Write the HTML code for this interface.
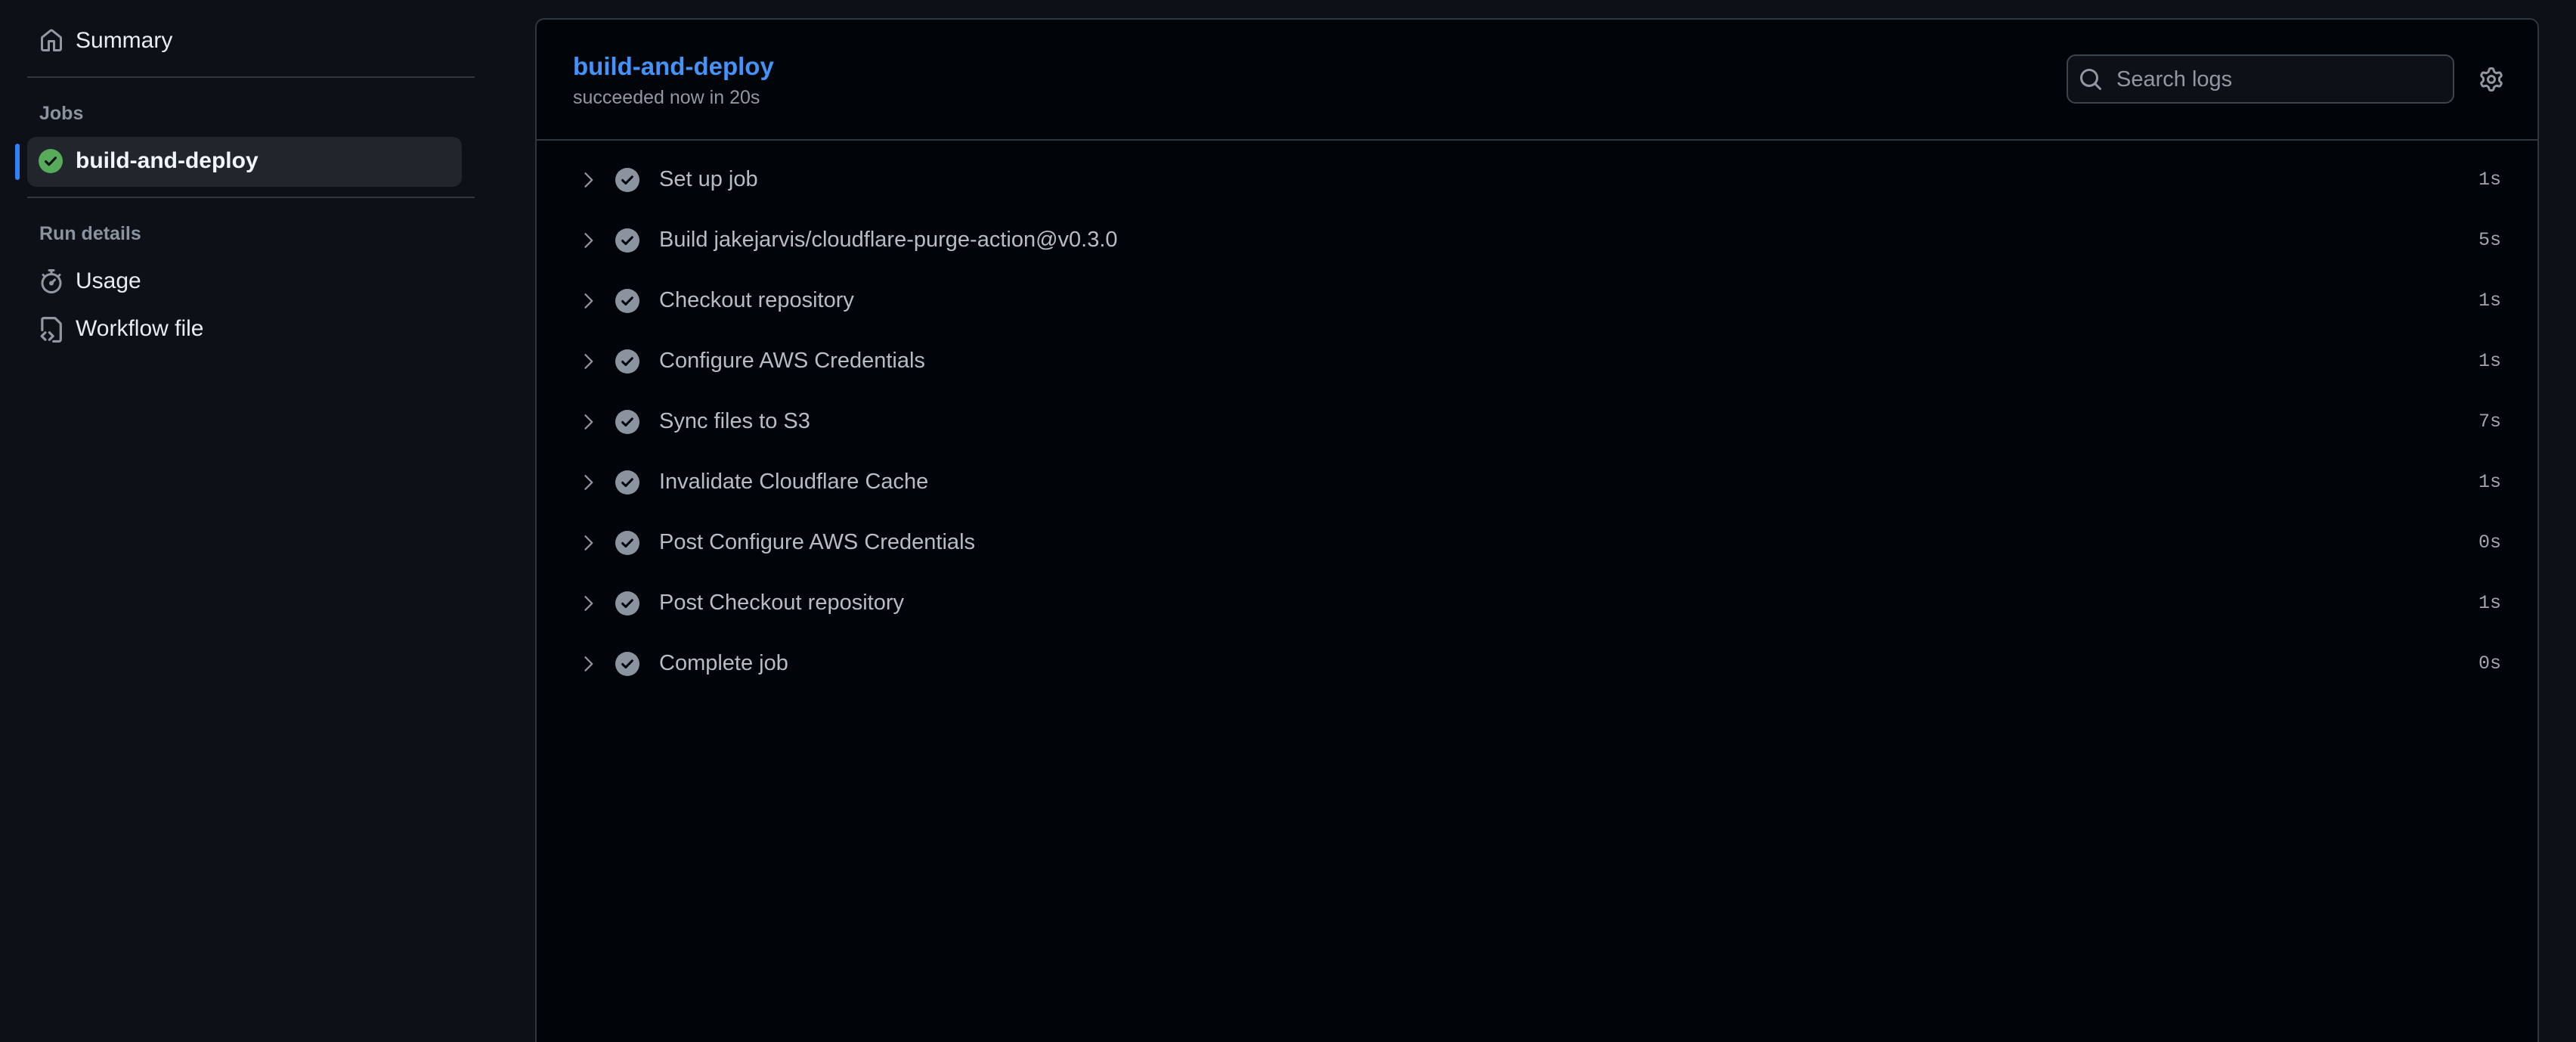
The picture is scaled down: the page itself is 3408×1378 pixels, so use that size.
<!DOCTYPE html>
<html><head><meta charset="utf-8"><style>
*{box-sizing:border-box;margin:0;padding:0}
html,body{width:3408px;height:1378px;overflow:hidden;background:#0d1117;font-family:"Liberation Sans",sans-serif;color:#e6edf3}
#wrap{position:relative;width:3408px;height:1378px;overflow:hidden}
.abs{position:absolute}
.side-t{position:absolute;left:100px;font-size:30px;line-height:36px;color:#e6edf3}
.lbl{position:absolute;left:52px;font-size:25px;font-weight:bold;color:#8b949e}
.hr{position:absolute;left:36px;width:592px;height:2px;background:#30363d}
.panel{position:absolute;left:708px;top:24px;width:2651px;height:1420px;background:#010409;border:2px solid #30363d;border-radius:12px}
.row{position:absolute;left:0;width:100%;height:80px}
.row .chev{position:absolute;left:54px;top:26px}
.row .ck{position:absolute;left:104px;top:24px}
.row .nm{position:absolute;left:162px;top:21px;font-size:29px;line-height:36px;color:#b7bdc5}
.row .tm{position:absolute;right:48px;top:22px;font-family:"Liberation Mono",monospace;font-size:25px;line-height:36px;color:#9ea6af}
</style></head><body><div id="wrap">
<svg class="abs" style="left:52px;top:38px" width="32" height="32" viewBox="0 0 16 16"><path fill="#9198a1" d="M6.906.664a1.749 1.749 0 0 1 2.187 0l5.25 4.2c.415.332.657.835.657 1.367v7.019A1.75 1.75 0 0 1 13.250 15h-3.5a.75.75 0 0 1-.75-.75V9H7v5.25a.75.75 0 0 1-.75.75h-3.5A1.75 1.75 0 0 1 1 13.25V6.23c0-.531.242-1.034.657-1.366l5.25-4.2Zm1.25 1.171a.25.25 0 0 0-.312 0l-5.25 4.2a.25.25 0 0 0-.094.196v7.019c0 .138.112.25.25.25H5.5V8.25a.75.75 0 0 1 .75-.75h3.5a.75.75 0 0 1 .75.75v5.25h2.75a.25.25 0 0 0 .25-.25V6.23a.25.25 0 0 0-.094-.195Z"/></svg>
<div class="side-t" style="top:36px">Summary</div>
<div class="hr" style="top:101px"></div>
<div class="lbl" style="top:136px">Jobs</div>
<div class="abs" style="left:36px;top:181px;width:575px;height:66px;background:#21262d;border-radius:12px"></div>
<div class="abs" style="left:20px;top:190px;width:6px;height:48px;background:#2f81f7;border-radius:3px"></div>
<svg class="abs" style="left:51px;top:197px" width="32" height="32" viewBox="0 0 16 16"><circle cx="8" cy="8" r="8" fill="#57ab5a"/><path d="M4.8 8.3l2.1 2.1 4.3-4.5" stroke="#0d1117" stroke-width="1.6" fill="none" stroke-linecap="round" stroke-linejoin="round"/></svg>
<div class="side-t" style="top:195px;font-weight:bold;color:#f0f6fc">build-and-deploy</div>
<div class="hr" style="top:260px"></div>
<div class="lbl" style="top:295px">Run details</div>
<svg class="abs" style="left:52px;top:356px" width="32" height="32" viewBox="0 0 16 16"><path fill="#9198a1" d="M5.75.75A.75.75 0 0 1 6.5 0h3a.75.75 0 0 1 0 1.5h-.75v1l-.001.041a6.724 6.724 0 0 1 3.464 1.435l.007-.006.75-.75a.749.749 0 0 1 1.275.326.749.749 0 0 1-.215.734l-.75.75-.006.007a6.75 6.75 0 1 1-10.548 0L2.72 5.03l-.75-.75a.751.751 0 0 1 .018-1.042.751.751 0 0 1 1.042-.018l.75.75.007.006A6.720 6.720 0 0 1 7.25 2.541V1.5H6.5a.75.75 0 0 1-.75-.75ZM8 14.5A5.25 5.25 0 1 0 8 4a5.25 5.25 0 0 0 0 10.5Zm.389-6.7 1.33-1.33a.75.75 0 1 1 1.061 1.060L9.45 8.861A1.503 1.503 0 0 1 8 10.75a1.499 1.499 0 1 1 .389-2.95Z"/></svg>
<div class="side-t" style="top:354px">Usage</div>
<svg class="abs" style="left:50px;top:419px" width="34" height="34" viewBox="0 0 16 16"><path fill="#9198a1" d="M2 1.75C2 .784 2.784 0 3.75 0h6.586c.464 0 .909.184 1.237.513l2.914 2.914c.329.328.513.773.513 1.237v9.586A1.75 1.75 0 0 1 13.25 16h-3.5a.75.75 0 0 1 0-1.5h3.5a.25.25 0 0 0 .25-.25V4.664a.25.25 0 0 0-.073-.177l-2.914-2.914a.25.25 0 0 0-.177-.073H3.75a.25.25 0 0 0-.25.25v6.5a.75.75 0 0 1-1.5 0v-6.5Zm3.22 8.53-1.72 1.72 1.72 1.72a.75.75 0 0 1-1.06 1.060l-2.25-2.25a.75.75 0 0 1 0-1.060l2.25-2.25a.75.75 0 0 1 1.06 1.060Zm2.56-1.06 2.25 2.25a.75.75 0 0 1 0 1.060l-2.25 2.25a.75.75 0 1 1-1.06-1.060l1.72-1.72-1.72-1.72a.75.75 0 1 1 1.06-1.060Z"/></svg>
<div class="side-t" style="top:417px">Workflow file</div>

<div class="panel">
  <div class="abs" style="left:48px;top:42px;font-size:33px;font-weight:bold;color:#4493f8;line-height:40px">build-and-deploy</div>
  <div class="abs" style="left:48px;top:88px;font-size:25px;color:#9198a1;line-height:30px">succeeded now in 20s</div>
  <div class="abs" style="left:2024px;top:46px;width:513px;height:65px;background:#0d1117;border:2px solid #3d444d;border-radius:12px">
    <svg class="abs" style="left:14px;top:15px" width="32" height="32" viewBox="0 0 16 16"><path fill="#9198a1" d="M10.68 11.74a6 6 0 0 1-7.922-8.982 6 6 0 0 1 8.982 7.922l3.040 3.040a.749.749 0 0 1-.326 1.275.749.749 0 0 1-.734-.215ZM11.5 7a4.499 4.499 0 1 0-8.997 0A4.499 4.499 0 0 0 11.5 7Z"/></svg>
    <div class="abs" style="left:64px;top:12px;font-size:29px;line-height:38px;color:#9198a1">Search logs</div>
  </div>
  <svg class="abs" style="left:2570px;top:63px" width="32" height="32" viewBox="0 0 16 16"><path fill="#9198a1" d="M8 0a8.2 8.2 0 0 1 .701.031C9.444.095 9.99.645 10.16 1.29l.288 1.107c.018.066.079.158.212.224.231.114.454.243.668.386.123.082.233.09.299.071l1.103-.303c.644-.176 1.392.021 1.82.63.27.385.506.792.704 1.218.315.675.111 1.422-.364 1.891l-.814.806c-.049.048-.098.147-.088.294.016.257.016.515 0 .772-.01.147.038.246.088.294l.814.806c.475.469.679 1.216.364 1.891a7.977 7.977 0 0 1-.704 1.217c-.428.61-1.176.807-1.82.63l-1.102-.302c-.067-.019-.177-.011-.3.071a5.909 5.909 0 0 1-.668.386c-.133.066-.194.158-.211.224l-.29 1.106c-.168.646-.715 1.196-1.458 1.26a8.006 8.006 0 0 1-1.402 0c-.743-.064-1.289-.614-1.458-1.26l-.289-1.106c-.018-.066-.079-.158-.212-.224a5.738 5.738 0 0 1-.668-.386c-.123-.082-.233-.09-.299-.071l-1.103.303c-.644.176-1.392-.021-1.82-.63a8.12 8.12 0 0 1-.704-1.218c-.315-.675-.111-1.422.363-1.891l.815-.806c.05-.048.098-.147.088-.294a6.214 6.214 0 0 1 0-.772c.01-.147-.038-.246-.088-.294l-.815-.806C.635 6.045.431 5.298.746 4.623a7.92 7.92 0 0 1 .704-1.217c.428-.61 1.176-.807 1.82-.63l1.102.302c.067.019.177.011.3-.071.214-.143.437-.272.668-.386.133-.066.194-.158.211-.224l.29-1.106C6.009.645 6.556.095 7.299.03 7.53.01 7.764 0 8 0Zm-.571 1.525c-.036.003-.108.036-.137.146l-.289 1.105c-.147.561-.549.967-.998 1.189-.173.086-.34.183-.5.29-.417.278-.97.423-1.529.27l-1.103-.303c-.109-.03-.175.016-.195.045-.22.312-.412.644-.573.99-.014.031-.021.11.059.19l.815.806c.411.406.562.957.53 1.456a4.709 4.709 0 0 0 0 .582c.032.499-.119 1.05-.53 1.456l-.815.806c-.081.08-.073.159-.059.19.162.346.353.677.573.989.02.03.085.076.195.046l1.102-.303c.56-.153 1.113-.008 1.53.27.161.107.328.204.501.29.447.222.85.629.997 1.189l.289 1.105c.029.109.101.143.137.146a6.6 6.6 0 0 0 1.142 0c.036-.003.108-.036.137-.146l.289-1.105c.147-.561.549-.967.998-1.189.173-.086.34-.183.5-.29.417-.278.97-.423 1.529-.27l1.103.303c.109.029.175-.016.195-.045.22-.313.411-.644.573-.99.014-.031.021-.11-.059-.19l-.815-.806c-.411-.406-.562-.957-.53-1.456a4.709 4.709 0 0 0 0-.582c-.032-.499.119-1.05.53-1.456l.815-.806c.081-.08.073-.159.059-.19a6.464 6.464 0 0 0-.573-.989c-.02-.03-.085-.076-.195-.046l-1.102.303c-.56.153-1.113.008-1.53-.27a4.440 4.440 0 0 0-.501-.29c-.447-.222-.85-.629-.997-1.189l-.289-1.105c-.029-.11-.101-.143-.137-.146a6.6 6.6 0 0 0-1.142 0ZM11 8a3 3 0 1 1-6 0 3 3 0 0 1 6 0ZM9.5 8a1.5 1.5 0 1 0-3.001.001A1.5 1.5 0 0 0 9.5 8Z"/></svg>
  <div class="abs" style="left:0;top:158px;width:100%;height:2px;background:#30363d"></div>
  <div class="abs" style="left:0;top:172px;width:100%">
    <div class="row" style="top:0"><svg class="chev" width="28" height="28" viewBox="0 0 16 16"><path d="M6 3l5 5-5 5" stroke="#9198a1" stroke-width="1.3" fill="none" stroke-linecap="round" stroke-linejoin="round"/></svg><svg class="ck" width="32" height="32" viewBox="0 0 16 16"><circle cx="8" cy="8" r="8" fill="#8b949e"/><path d="M4.8 8.2l2.1 2.1 4.3-4.4" stroke="#010409" stroke-width="1.5" fill="none" stroke-linecap="round" stroke-linejoin="round"/></svg><div class="nm">Set up job</div><div class="tm">1s</div></div>
    <div class="row" style="top:80px"><svg class="chev" width="28" height="28" viewBox="0 0 16 16"><path d="M6 3l5 5-5 5" stroke="#9198a1" stroke-width="1.3" fill="none" stroke-linecap="round" stroke-linejoin="round"/></svg><svg class="ck" width="32" height="32" viewBox="0 0 16 16"><circle cx="8" cy="8" r="8" fill="#8b949e"/><path d="M4.8 8.2l2.1 2.1 4.3-4.4" stroke="#010409" stroke-width="1.5" fill="none" stroke-linecap="round" stroke-linejoin="round"/></svg><div class="nm">Build jakejarvis/cloudflare-purge-action@v0.3.0</div><div class="tm">5s</div></div>
    <div class="row" style="top:160px"><svg class="chev" width="28" height="28" viewBox="0 0 16 16"><path d="M6 3l5 5-5 5" stroke="#9198a1" stroke-width="1.3" fill="none" stroke-linecap="round" stroke-linejoin="round"/></svg><svg class="ck" width="32" height="32" viewBox="0 0 16 16"><circle cx="8" cy="8" r="8" fill="#8b949e"/><path d="M4.8 8.2l2.1 2.1 4.3-4.4" stroke="#010409" stroke-width="1.5" fill="none" stroke-linecap="round" stroke-linejoin="round"/></svg><div class="nm">Checkout repository</div><div class="tm">1s</div></div>
    <div class="row" style="top:240px"><svg class="chev" width="28" height="28" viewBox="0 0 16 16"><path d="M6 3l5 5-5 5" stroke="#9198a1" stroke-width="1.3" fill="none" stroke-linecap="round" stroke-linejoin="round"/></svg><svg class="ck" width="32" height="32" viewBox="0 0 16 16"><circle cx="8" cy="8" r="8" fill="#8b949e"/><path d="M4.8 8.2l2.1 2.1 4.3-4.4" stroke="#010409" stroke-width="1.5" fill="none" stroke-linecap="round" stroke-linejoin="round"/></svg><div class="nm">Configure AWS Credentials</div><div class="tm">1s</div></div>
    <div class="row" style="top:320px"><svg class="chev" width="28" height="28" viewBox="0 0 16 16"><path d="M6 3l5 5-5 5" stroke="#9198a1" stroke-width="1.3" fill="none" stroke-linecap="round" stroke-linejoin="round"/></svg><svg class="ck" width="32" height="32" viewBox="0 0 16 16"><circle cx="8" cy="8" r="8" fill="#8b949e"/><path d="M4.8 8.2l2.1 2.1 4.3-4.4" stroke="#010409" stroke-width="1.5" fill="none" stroke-linecap="round" stroke-linejoin="round"/></svg><div class="nm">Sync files to S3</div><div class="tm">7s</div></div>
    <div class="row" style="top:400px"><svg class="chev" width="28" height="28" viewBox="0 0 16 16"><path d="M6 3l5 5-5 5" stroke="#9198a1" stroke-width="1.3" fill="none" stroke-linecap="round" stroke-linejoin="round"/></svg><svg class="ck" width="32" height="32" viewBox="0 0 16 16"><circle cx="8" cy="8" r="8" fill="#8b949e"/><path d="M4.8 8.2l2.1 2.1 4.3-4.4" stroke="#010409" stroke-width="1.5" fill="none" stroke-linecap="round" stroke-linejoin="round"/></svg><div class="nm">Invalidate Cloudflare Cache</div><div class="tm">1s</div></div>
    <div class="row" style="top:480px"><svg class="chev" width="28" height="28" viewBox="0 0 16 16"><path d="M6 3l5 5-5 5" stroke="#9198a1" stroke-width="1.3" fill="none" stroke-linecap="round" stroke-linejoin="round"/></svg><svg class="ck" width="32" height="32" viewBox="0 0 16 16"><circle cx="8" cy="8" r="8" fill="#8b949e"/><path d="M4.8 8.2l2.1 2.1 4.3-4.4" stroke="#010409" stroke-width="1.5" fill="none" stroke-linecap="round" stroke-linejoin="round"/></svg><div class="nm">Post Configure AWS Credentials</div><div class="tm">0s</div></div>
    <div class="row" style="top:560px"><svg class="chev" width="28" height="28" viewBox="0 0 16 16"><path d="M6 3l5 5-5 5" stroke="#9198a1" stroke-width="1.3" fill="none" stroke-linecap="round" stroke-linejoin="round"/></svg><svg class="ck" width="32" height="32" viewBox="0 0 16 16"><circle cx="8" cy="8" r="8" fill="#8b949e"/><path d="M4.8 8.2l2.1 2.1 4.3-4.4" stroke="#010409" stroke-width="1.5" fill="none" stroke-linecap="round" stroke-linejoin="round"/></svg><div class="nm">Post Checkout repository</div><div class="tm">1s</div></div>
    <div class="row" style="top:640px"><svg class="chev" width="28" height="28" viewBox="0 0 16 16"><path d="M6 3l5 5-5 5" stroke="#9198a1" stroke-width="1.3" fill="none" stroke-linecap="round" stroke-linejoin="round"/></svg><svg class="ck" width="32" height="32" viewBox="0 0 16 16"><circle cx="8" cy="8" r="8" fill="#8b949e"/><path d="M4.8 8.2l2.1 2.1 4.3-4.4" stroke="#010409" stroke-width="1.5" fill="none" stroke-linecap="round" stroke-linejoin="round"/></svg><div class="nm">Complete job</div><div class="tm">0s</div></div>
  </div>
</div>
</div></body></html>
